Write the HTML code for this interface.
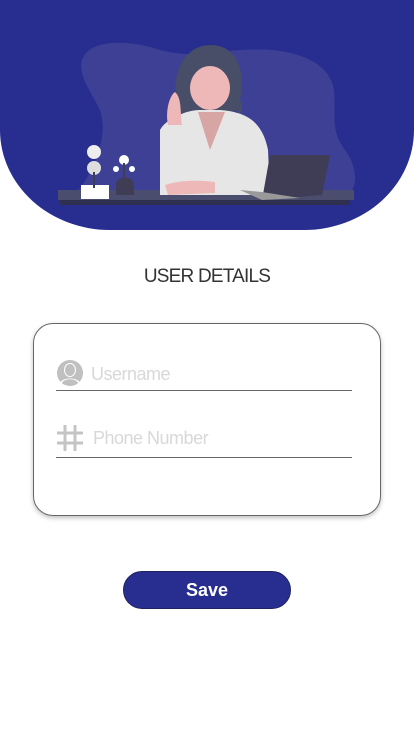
<!DOCTYPE html>
<html><head><meta charset="utf-8"><style>
body{margin:0;width:414px;height:736px;background:#fff;position:relative;overflow:hidden;font-family:"Liberation Sans",sans-serif}
.hdr{position:absolute;left:0;top:0;width:414px;height:230px;background:#282e8f;border-radius:0 0 110px 110px/0 0 100px 100px}
.title{position:absolute;top:266px;left:0;width:414px;text-align:center;font-size:19px;color:#333;letter-spacing:-0.8px;font-weight:300}
.card{position:absolute;left:33px;top:323px;width:346px;height:191px;border:1px solid #666;border-radius:20px;box-shadow:0 2px 5px rgba(0,0,0,.25)}
.line{position:absolute;left:56px;width:296px;height:1px;background:#666}
.ph{position:absolute;font-size:18px;color:#d8d8d8;letter-spacing:-0.5px}
.btn{position:absolute;left:123px;top:571px;width:166px;height:36px;background:#282e8f;border:1px solid #1f235e;border-radius:19px;color:#fff;font-weight:bold;font-size:18px;text-align:center;line-height:37px}
</style></head><body>
<div class="hdr"></div>
<svg style="position:absolute;left:0;top:0" width="414" height="230" viewBox="0 0 414 230">
<path d="M82 60 C90 38 130 40 160 50 C190 58 210 52 240 50 C290 46 330 60 334 90 C336 115 330 130 345 150 C360 170 358 195 340 200 L70 200 C90 180 110 140 100 110 C90 90 78 75 82 60Z" fill="#3d4095"/>
<rect x="58" y="190" width="296" height="10" fill="#4a4d6e"/>
<rect x="60" y="200" width="290" height="5" fill="#2f3050"/>
<path d="M178 110 C170 80 180 46 210 45 C240 45 245 75 240 100 C245 110 240 118 236 110 L195 125 Z" fill="#484d68"/>
<ellipse cx="210" cy="88" rx="20" ry="22" fill="#efb8b8"/>
<path d="M160 130 C165 120 185 110 200 110 L220 110 C245 112 262 120 268 150 L270 195 L160 195 Z" fill="#e6e6e6"/>
<path d="M198 112 L225 112 L210 150 Z" fill="#d8a5a5"/>
<path d="M168 125 C165 110 170 95 175 92 C182 98 180 112 182 125 Z" fill="#efb8b8"/>
<path d="M165 185 C180 180 200 180 215 182 L215 193 L168 195 Z" fill="#efb8b8"/>
<path d="M270 155 L330 155 L322 195 L262 200 Z" fill="#3f3d56"/>
<path d="M240 190 L262 200 L300 198 L262 192 Z" fill="#999"/>
<rect x="81" y="185" width="28" height="14" fill="#fff"/>
<circle cx="94" cy="152" r="7" fill="#eee"/><circle cx="94" cy="168" r="7" fill="#ddd"/>
<line x1="94" y1="172" x2="94" y2="188" stroke="#3f3d56" stroke-width="2"/>
<path d="M116 195 L116 185 C116 175 134 175 134 185 L134 195 Z" fill="#3f3d56"/>
<circle cx="124" cy="160" r="5" fill="#fff"/><circle cx="116" cy="169" r="3" fill="#fff"/><circle cx="132" cy="169" r="3" fill="#fff"/>
<line x1="124" y1="163" x2="124" y2="178" stroke="#3f3d56" stroke-width="2"/>
</svg>
<div class="title">USER DETAILS</div>
<div class="card"></div>
<svg style="position:absolute;left:56px;top:359px" width="28" height="28" viewBox="0 0 28 28"><circle cx="14" cy="14" r="13" fill="#c0c0c0"/><ellipse cx="14" cy="11" rx="6" ry="7" fill="#fff"/><path d="M4 24 C6 18 22 18 24 24 Z" fill="#fff"/><ellipse cx="14" cy="11" rx="5" ry="6" fill="#c0c0c0"/><path d="M6 24 C8 19 20 19 22 24 Z" fill="#c0c0c0"/></svg>
<div class="ph" style="left:91px;top:364px">Username</div>
<div class="line" style="top:390px"></div>
<svg style="position:absolute;left:56px;top:424px" width="28" height="28" viewBox="0 0 28 28" stroke="#c4c4c4" stroke-width="3"><line x1="9" y1="1" x2="9" y2="27"/><line x1="19" y1="1" x2="19" y2="27"/><line x1="1" y1="9" x2="27" y2="9"/><line x1="1" y1="19" x2="27" y2="19"/></svg>
<div class="ph" style="left:93px;top:428px">Phone Number</div>
<div class="line" style="top:457px"></div>
<div class="btn">Save</div>
</body></html>
